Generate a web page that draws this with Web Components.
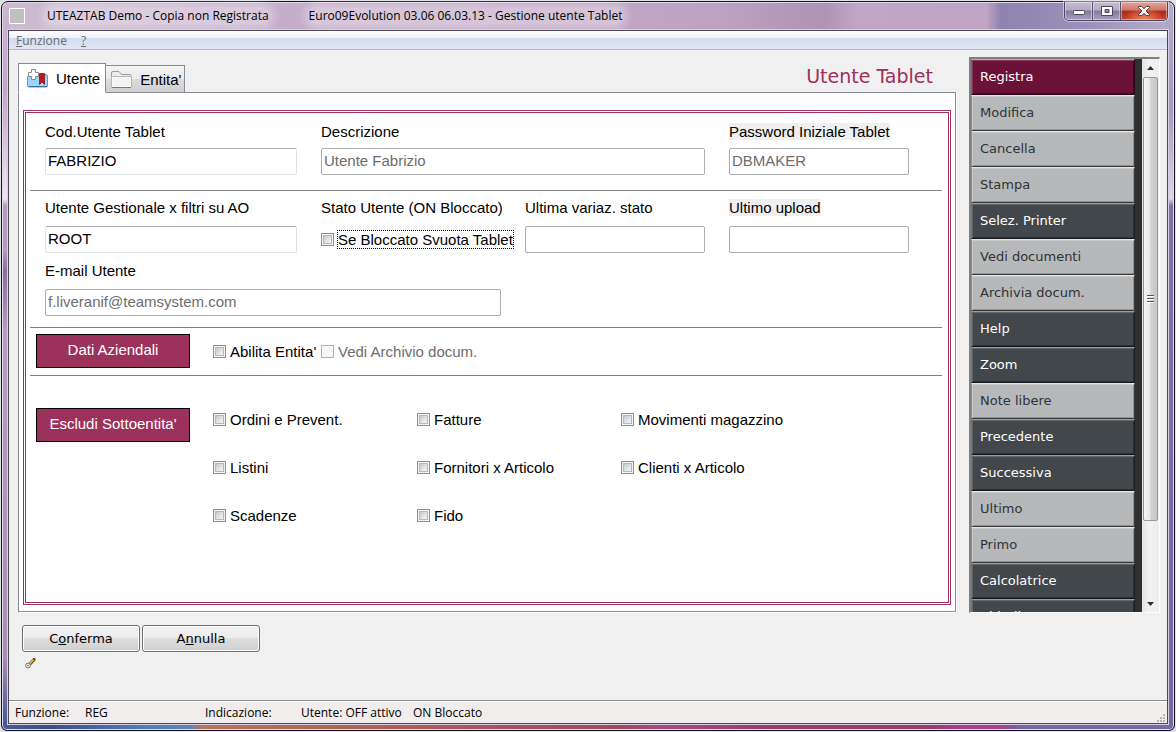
<!DOCTYPE html>
<html lang="it">
<head>
<meta charset="utf-8">
<title>Gestione utente Tablet</title>
<style>
  html, body { height: 100%; }
  body { margin: 0; background: #dfe3e6; font: 15px/17px "Liberation Sans", Arial, sans-serif; color: #000; }
</style>
</head>
<body>
<app-window>
  <title-bar slot="title" product="UTEAZTAB Demo - Copia non Registrata" heading="Euro09Evolution 03.06 06.03.13 - Gestione utente Tablet"></title-bar>
  <menu-bar slot="menu"></menu-bar>
  <tab-panel slot="main" heading="Utente Tablet">
    <form-section class="first">
      <form-field label="Cod.Utente Tablet" value="FABRIZIO" kind="edit"></form-field>
      <form-field label="Descrizione" value="Utente Fabrizio" kind="locked" class="two"></form-field>
      <form-field label="Password Iniziale Tablet" value="DBMAKER" kind="locked" shaded></form-field>
    </form-section>
    <form-section class="second">
      <form-field label="Utente Gestionale x filtri su AO" value="ROOT" kind="edit"></form-field>
      <form-group label="Stato Utente (ON Bloccato)"><check-item label="Se Bloccato Svuota Tablet" focused></check-item></form-group>
      <form-field label="Ultima variaz. stato" value="" kind="locked"></form-field>
      <form-field label="Ultimo upload" value="" kind="locked" shaded></form-field>
      <form-field label="E-mail Utente" value="f.liveranif@teamsystem.com" kind="locked" class="two"></form-field>
    </form-section>
    <option-row class="company" label="Dati Aziendali">
      <check-item label="Abilita Entita'"></check-item>
      <check-item label="Vedi Archivio docum." disabled></check-item>
    </option-row>
    <option-row class="exclude" label="Escludi Sottoentita'">
      <check-item label="Ordini e Prevent."></check-item>
      <check-item label="Fatture"></check-item>
      <check-item label="Movimenti magazzino"></check-item>
      <check-item label="Listini"></check-item>
      <check-item label="Fornitori x Articolo"></check-item>
      <check-item label="Clienti x Articolo"></check-item>
      <check-item label="Scadenze"></check-item>
      <check-item label="Fido"></check-item>
    </option-row>
  </tab-panel>
  <action-list slot="side"></action-list>
  <confirm-bar slot="footer"></confirm-bar>
  <status-bar slot="status"></status-bar>
</app-window>

<script>
const define = (name, render) => customElements.define(name, class extends HTMLElement {
  constructor() { super(); this.attachShadow({ mode: 'open' }); }
  connectedCallback() { this.shadowRoot.innerHTML = '<style>*{box-sizing:border-box}</style>' + render(this); }
});
const UI = '"Open Sans", "Noto Sans", sans-serif';
const WIDE = '"DejaVu Sans", Verdana, sans-serif';

define('app-window', () => `
<style>
  :host { display: block; box-sizing: border-box; height: 100vh; padding: 1px; overflow: hidden; }
  .frame { height: 100%; display: flex; flex-direction: column; border: 1px solid #16161e; border-radius: 7px 7px 6px 6px; padding: 0 6px 6px;
    box-shadow: inset 0 0 0 1px #e3d7ea;
    background:
      linear-gradient(90deg, #4a5c93 0, #3c4c8c 4%, #4f7db8 12%, #5c83ba 16%, #b4735f 17%, #a86a52 27%, #b0585c 36%, #9c4a5c 53%, #a64c80 56%, #983a6a 66%, #983a6a 79%, #a8408c 82%, #a8408c 85%, #6f6a9f 87%, #756ca0 100%) bottom / 100% 8px no-repeat,
      linear-gradient(180deg, #cbb9d4 0, #bfa6c8 12%, #f0e4f2 27%, #b79ac0 28%, #b79ac0 34%, #8b6f97 37%, #b89cc2 45%, #b095ba 70%, #a98db3 90%, #4f5f95 98%) left / 8px 100% no-repeat,
      linear-gradient(180deg, #b3a9c9 0, #a49bc2 15%, #dcd6e8 27%, #7d74a8 28%, #7369a2 100%) right / 8px 100% no-repeat,
      linear-gradient(90deg, #cdbbd2 0, #c2abc8 30%, #bea2c2 61%, #ad94b3 70%, #c1a5c6 73%, #c0a4c5 84%, #8f83b0 85.2%, #9a90b8 92%, #b6accb 100%); }
  .client { flex: 1; min-height: 0; display: flex; flex-direction: column; border: 1px solid #4c4656; outline: 1px solid #dccfe4; background: #f0f0f0; }
  main { flex: 1; min-height: 0; display: grid; grid-template-columns: minmax(0, 1fr) 191px; gap: 12px; padding: 7px 7px 0 9px; }
</style>
<div class="frame">
  <slot name="title"></slot>
  <div class="client">
    <slot name="menu"></slot>
    <main><slot name="main"></slot><slot name="side"></slot></main>
    <slot name="footer"></slot>
    <slot name="status"></slot>
  </div>
</div>`);

define('title-bar', el => `
<style>
  :host { display: block; font: 12px/16px ${UI}; }
  header { display: flex; align-items: flex-start; height: 28px; }
  .icon { width: 16px; height: 16px; margin: 6px 22px 0 1px; background: #c0c0c0; border: 1px solid #fff; flex: none; }
  .text { display: flex; flex: 1; gap: 40px; padding-top: 6px; white-space: pre; font: inherit; margin: 0; }
  .text span { border-radius: 8px; background: #ffffff55; box-shadow: 0 0 9px 5px #ffffff55; }
  .controls { display: flex; border: 1px solid #4c4560; border-top: 0; border-radius: 0 0 5px 5px; overflow: hidden; box-shadow: 0 0 0 1px #ffffff77; }
  button { width: 28px; height: 18px; padding: 0; border: 0; border-right: 1px solid #5c5474; background: linear-gradient(#c6bdd0, #b4aac4 45%, #81789c 50%, #a9a0c4); display: grid; place-items: center; box-shadow: inset 0 0 0 1px #ffffff66; }
  button:last-child { width: 46px; border: 0; background: radial-gradient(ellipse at 50% 110%, #f08a5a, transparent 60%), linear-gradient(#e0a79c, #cf7468 45%, #ab2a18 50%, #c8452c); }
</style>
<header>
  <div class="icon"></div>
  <h1 class="text"><span>${el.getAttribute('product')}</span><span>${el.getAttribute('heading')}</span></h1>
  <div class="controls">
    <button aria-label="Riduci"><svg width="14" height="12"><rect x="1.5" y="5.500" width="11" height="4" rx="1" fill="#fff" stroke="#4b4962"/></svg></button>
    <button aria-label="Ingrandisci"><svg width="12" height="12"><path fill-rule="evenodd" d="M.5 1.500h11v9H.5zM4 4.500v3h4v-3z" fill="#fff" stroke="#4b4962"/></svg></button>
    <button aria-label="Chiudi"><svg width="14" height="12"><path d="M1.500 1.500h3.300L7 3.800l2.200-2.300h3.300v1L9.200 6l3.300 3.500v1H9.200L7 8.200l-2.200 2.300H1.500v-1L4.800 6 1.500 2.500z" fill="#fff" stroke="#5b3a48"/></svg></button>
  </div>
</header>`);

define('menu-bar', () => `
<style>
  :host { display: block; font: 12px/20px ${UI}; }
  nav { display: flex; gap: 14px; height: 19px; padding: 0 7px; border-bottom: 1px solid #b4b8cc; background: linear-gradient(#fff 0, #eef1f9 38%, #d4dbee 40%, #e0e6f5 100%); }
  a { color: #6d6d6d; text-decoration: none; }
</style>
<nav><a href="#funzione"><u>F</u>unzione</a><a href="#aiuto"><u>?</u></a></nav>`);

define('tab-panel', el => `
<style>
  :host { display: flex; flex-direction: column; min-width: 0; min-height: 0; padding-bottom: 1px; }
  .strip { display: flex; align-items: flex-end; height: 36px; position: relative; margin-bottom: -1px; }
  .tab { display: flex; align-items: center; gap: 7px; height: 28px; padding: 0 3px 0 4px; border: 1px solid #898c95; border-left: 0; background: linear-gradient(#f3f3f3, #ebebeb 48%, #dcdcdc 52%, #cfcfcf); font: inherit; font-size: 15px; color: #000; }
  .tab.on { height: 30px; padding: 0 5px 0 7px; border-left: 1px solid #898c95; border-bottom-color: #fff; background: #fff; }
  h2 { margin: 0 24px 5px auto; font: 19px/24px ${WIDE}; color: #9c315c; }
  .page { flex: 1; min-height: 0; border: 1px solid #898c95; background: #fff; padding: 17px 4px 6px; box-shadow: 1px 1px 0 #fff; margin-right: 1px; }
  .form { height: 100%; border: 3px double #9c315c; padding: 0 6px 0 4px; }
</style>
<div class="strip" role="tablist">
  <button class="tab on" role="tab" aria-selected="true">
    <svg width="23" height="21" viewBox="0 0 23 21"><path d="M1.500 8.500h6l2-2h10.500q1.500 0 1.500 1.500v10q0 1-1 1h-18q-1 0-1-1z" fill="#9dd4fb" stroke="#5d9bc9"/><path d="M3 18.500h18" stroke="#3d6f98"/><path d="M13.500 5.500h5v11l-2.500-2.500-2.500 2.500z" fill="#c01818" stroke="#8f1414" stroke-width=".8"/><path d="M5.500 1.500h4v3h3v4h-3v3h-4v-3h-3v-4h3z" fill="#fff" stroke="#8a8a8a"/></svg>Utente</button>
  <button class="tab" role="tab">
    <svg width="23" height="21" viewBox="0 0 23 21"><path d="M1.500 17V4q0-1.500 1.500-1.500h6l2.500 3h8.500q1 0 1 1V17q0 1.500-1.500 1.500h-16.500q-1.500 0-1.500-1.500z" fill="#ececec" stroke="#9a9a9a"/><path d="M2 9q0-1 1-1h17q1 0 1 1v8q0 1-1 1H3q-1 0-1-1z" fill="#f3f3f3" stroke="#fff"/><path d="M1.500 18V8.500q0-1 1-1h18q1 0 1 1V18" fill="none" stroke="#b5b5b5"/><path d="M2 18.500h19" stroke="#777"/></svg>Entita'</button>
  <h2>${el.getAttribute('heading')}</h2>
</div>
<div class="page"><div class="form"><slot></slot></div></div>`);

define('form-section', () => `
<style>
  :host { display: block; border-bottom: 1px solid #808080; }
  .grid { display: grid; grid-template-columns: minmax(0, 252fr) repeat(3, minmax(0, 180fr)); gap: 9px 24px; padding: 8px 33px 11px 15px; }
  :host(.first) .grid { padding: 10px 33px 15px 15px; }
  :host(.first) ::slotted(*) { gap: 8px; }
  ::slotted(.two) { grid-column: span 2; }
</style>
<div class="grid"><slot></slot></div>`);

define('form-field', el => `
<style>
  :host { display: flex; flex-direction: column; gap: 10px; align-items: flex-start; white-space: nowrap; }
  label { font-size: 15px; line-height: 17px; }
  :host([shaded]) label { background: #efefef; }
  input { width: 100%; height: 27px; padding: 0 2px 2px; border: 1px solid #abadb3; border-radius: 2px; background: #fff; font: 15px/17px "Liberation Sans", Arial, sans-serif; color: #6d6d6d; outline: 0; }
  :host([kind=edit]) input { color: #000; border-color: #abadb3 #e2e3ea #e2e3ea; }
</style>
<label for="f">${el.getAttribute('label')}</label>
<input id="f" type="text" value="${el.getAttribute('value')}" ${el.getAttribute('kind') === 'locked' ? 'readonly' : ''}>`);

define('form-group', el => `
<style>
  :host { display: flex; flex-direction: column; gap: 15px; white-space: nowrap; }
</style>
<span>${el.getAttribute('label')}</span><slot></slot>`);

define('check-item', el => `
<style>
  :host { display: block; white-space: nowrap; }
  label { display: flex; align-items: center; gap: 4px; line-height: 17px; }
  input { appearance: none; flex: none; width: 13px; height: 13px; margin: 0; border: 1px solid #8e8f8f; background: linear-gradient(135deg, #c4c9d0, #f6f6f6) content-box, #f4f4f4; padding: 2px; box-shadow: inset 0 0 0 1px #f4f4f4, inset 0 0 0 2px #b4b8bd; }
  :host([disabled]) { color: #6d6d6d; }
  :host([disabled]) input { border-color: #b1b1b1; background: #f7f7f7; box-shadow: none; }
  :host([focused]) span { outline: 1px dotted #000; }
</style>
<label><input type="checkbox" ${el.hasAttribute('disabled') ? 'disabled' : ''}><span>${el.getAttribute('label')}</span></label>`);

define('option-row', el => `
<style>
  :host { display: grid; grid-template-columns: 154px minmax(0, 1fr); gap: 23px; padding: 6px 0 7px 6px; }
  :host(.company) { border-bottom: 1px solid #808080; }
  :host(.exclude) { padding-top: 32px; }
  button { height: 34px; padding: 0 0 3px; border: 1px solid #000; background: #9c315c; color: #fff; font: 15px/17px "Liberation Sans", Arial, sans-serif; }
  .items { display: grid; align-content: start; grid-template-columns: repeat(3, 180px); gap: 31px 24px; padding-top: 3px; }
  :host(.company) .items { grid-template-columns: 99px auto; column-gap: 9px; justify-content: start; padding-top: 9px; }
</style>
<button>${el.getAttribute('label')}</button>
<div class="items"><slot></slot></div>`);

define('action-list', () => {
  const items = [['Registra', 'main'], ['Modifica', ''], ['Cancella', ''], ['Stampa', ''], ['Selez. Printer', 'dark'], ['Vedi documenti', ''],
    ['Archivia docum.', ''], ['Help', 'dark'], ['Zoom', 'dark'], ['Note libere', ''], ['Precedente', 'dark'], ['Successiva', 'dark'],
    ['Ultimo', ''], ['Primo', ''], ['Calcolatrice', 'dark'], ['Chiudi', 'dark']];
  return `
<style>
  :host { display: flex; min-height: 0; overflow: hidden; border: 1px solid #808080; border-width: 2px 1px 1px 2px; border-color: #808080 #fff #fff #808080; background: #303030; }
  .list { flex: 1; margin-right: 7px; overflow: hidden; }
  button { display: block; width: 100%; height: 36px; padding: 0 8px 1px; text-align: left; border: 1px solid #3a3a3a; border-top-color: #e6e6e6; border-left-color: #8e8e8e; background: #b6b8ba; box-shadow: inset 1px 1px 0 #c6c8ca, inset -1px -1px 0 #8f9193; color: #2f3336; font: 13px/16px ${WIDE}; }
  button.dark { background: #42474b; color: #fff; border-color: #9a9da0 #1c1e20 #15171a #6d7276; box-shadow: inset 1px 1px 0 #62676b, inset -1px -1px 0 #2c3033; }
  button.main { background: #6c1137; color: #fff; border-color: #c0a8b2 #2b0413 #2b0413 #8d5068; box-shadow: inset 1px 1px 0 #8a3a5a, inset -1px -1px 0 #480a24; }
  .bar { width: 17px; display: flex; flex-direction: column; align-items: center; background: linear-gradient(90deg, #e4e4e4, #f2f2f2 40%, #ededed); }
  .bar svg { flex: none; }
  .thumb { width: 15px; flex: 0 1 444px; display: grid; place-items: center; border: 1px solid #979797; border-radius: 2px; background: linear-gradient(90deg, #f5f5f5, #e9e9eb 45%, #d2d2d6 52%, #c6c6ca); }
  .rest { flex: 1; }
</style>
<div class="list">${items.map(([t, c]) => `<button class="${c}">${t}</button>`).join('')}</div>
<div class="bar">
  <svg width="17" height="18"><path d="M5 11l3.500-4 3.500 4z" fill="#303030"/></svg>
  <div class="thumb"><svg width="7" height="8"><path d="M0 .5h7M0 3.500h7M0 6.500h7" stroke="#555"/><path d="M0 1.500h7M0 4.500h7M0 7.500h7" stroke="#fff"/></svg></div>
  <div class="rest"></div>
  <svg width="17" height="17"><path d="M5 7l3.500 4L12 7z" fill="#303030"/></svg>
</div>`;
});

define('confirm-bar', () => `
<style>
  :host { display: block; padding: 12px 13px 0; height: 87px; box-sizing: border-box; }
  .row { display: flex; gap: 2px; margin-bottom: 6px; }
  button { width: 118px; height: 27px; padding: 1px 0 0; border: 1px solid #707070; border-radius: 3px; box-shadow: inset 0 0 0 1px #fcfcfc; background: linear-gradient(#f2f2f2, #ebebeb 48%, #dddddd 50%, #cfcfcf); font: 13px/16px ${WIDE}; color: #000; }
  svg { display: block; margin-left: 3px; }
</style>
<div class="row"><button>C<u>o</u>nferma</button><button>A<u>n</u>nulla</button></div>
<svg width="11" height="11" viewBox="0 0 11 11"><path d="M4.500 6.500l4.500-5" stroke="#6b4a10" stroke-width="3.200" stroke-linecap="round"/><path d="M4.500 6l4-4.500" stroke="#f0c040" stroke-width="1.600"/><circle cx="3" cy="7.500" r="2.400" fill="#eee" stroke="#777"/><circle cx="3" cy="7.500" r=".7" fill="#555"/></svg>`);

define('status-bar', () => `
<style>
  :host { display: block; font: 12px/20px ${UI}; }
  footer { display: grid; grid-template-columns: 70px 120px 96px 112px 1fr auto; height: 23px; padding-left: 6px; border-top: 1px solid #8a8a8a; background: #f1edec; box-shadow: inset 0 1px 0 #fff; white-space: nowrap; line-height: 24px; }
  svg { align-self: end; }
</style>
<footer><span>Funzione:</span><span>REG</span><span>Indicazione:</span><span>Utente: OFF attivo</span><span>ON Bloccato</span>
<svg width="12" height="12"><path d="M8 1h2v2H8zM5 4h2v2H5zM8 4h2v2H8zM2 7h2v2H2zM5 7h2v2H5zM8 7h2v2H8z" fill="#b9b3b1"/></svg></footer>`);
</script>
</body>
</html>
